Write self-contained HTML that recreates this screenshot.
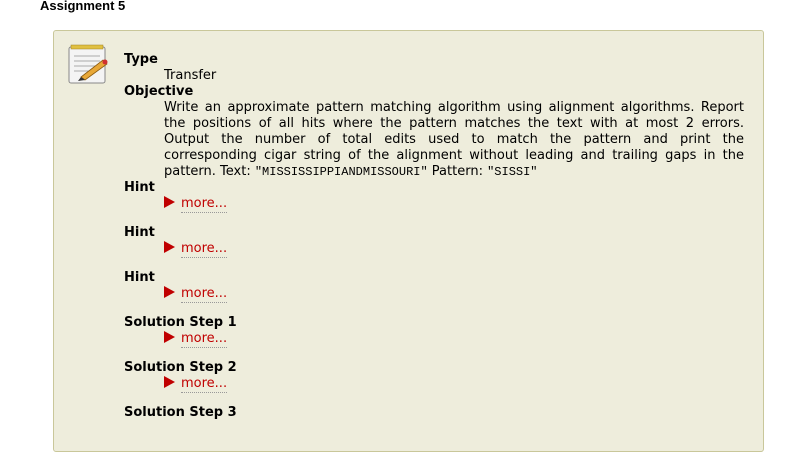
<!DOCTYPE html>
<html><head><style>
html,body{margin:0;width:798px;height:415px;overflow:hidden;background:#fff;font-family:"DejaVu Sans",Verdana,sans-serif;}
h1{position:absolute;left:40px;top:-2px;margin:0;font:bold 13px "Liberation Sans",Arial,sans-serif;}
.box{position:absolute;left:53px;top:30px;width:709px;height:420px;background:#eeeddc;border:1px solid #c9c79a;border-radius:3px;}
.c{position:absolute;left:70px;top:21px;width:620px;font-size:13px;line-height:16px;color:#000;}
.h{font-weight:bold;font-size:13px;}
.i{padding-left:40px;}
.l{display:block;text-align:justify;text-align-last:justify;white-space:nowrap;}
.l.last{text-align-last:left;}
.m{color:#c00000;}
.m span{border-bottom:1px dotted #999;padding-bottom:1px;}
.tri{display:inline-block;width:0;height:0;border-top:6px solid transparent;border-bottom:6px solid transparent;border-left:11px solid #c00000;vertical-align:-1px;margin-right:6px;}
.g{margin-bottom:13px;}
.mono{font-family:"Liberation Mono",monospace;font-size:12px;}
</style></head><body>
<h1>Assignment 5</h1>
<div class="box">
<svg style="position:absolute;left:11px;top:11px" width="46" height="46" viewBox="0 0 46 46">
<rect x="4" y="5" width="36" height="36" rx="2" fill="#f4f4f4" stroke="#888" />
<rect x="6" y="3" width="32" height="4" fill="#e0c040" stroke="#a08020" stroke-width=".5"/>
<g stroke="#aaa" stroke-width="1"><line x1="9" y1="14" x2="35" y2="14"/><line x1="9" y1="19" x2="35" y2="19"/><line x1="9" y1="24" x2="30" y2="24"/><line x1="9" y1="29" x2="25" y2="29"/></g>
<path d="M16 35 L38 18 L42 22 L20 38 Z" fill="#e8a838" stroke="#8a5a10" stroke-width=".8"/>
<path d="M16 35 L20 38 L13 39 Z" fill="#333"/>
<circle cx="40" cy="20" r="2.5" fill="#d03030"/>
</svg>
<div class="c">
<div class="h">Type</div>
<div class="i">Transfer</div>
<div class="h">Objective</div>
<div class="i" style="width:580px">
<span class="l">Write an approximate pattern matching algorithm using alignment algorithms. Report</span>
<span class="l">the positions of all hits where the pattern matches the text with at most 2 errors.</span>
<span class="l">Output the number of total edits used to match the pattern and print the</span>
<span class="l">corresponding cigar string of the alignment without leading and trailing gaps in the</span>
<span class="l last">pattern. Text: <span class="mono">"MISSISSIPPIANDMISSOURI"</span> Pattern: <span class="mono">"SISSI"</span></span>
</div>
<div class="h">Hint</div>
<div class="i m g"><i class="tri"></i><span>more...</span></div>
<div class="h">Hint</div>
<div class="i m g"><i class="tri"></i><span>more...</span></div>
<div class="h">Hint</div>
<div class="i m g"><i class="tri"></i><span>more...</span></div>
<div class="h">Solution Step 1</div>
<div class="i m g"><i class="tri"></i><span>more...</span></div>
<div class="h">Solution Step 2</div>
<div class="i m g"><i class="tri"></i><span>more...</span></div>
<div class="h">Solution Step 3</div>
</div>
</div>
</body></html>
